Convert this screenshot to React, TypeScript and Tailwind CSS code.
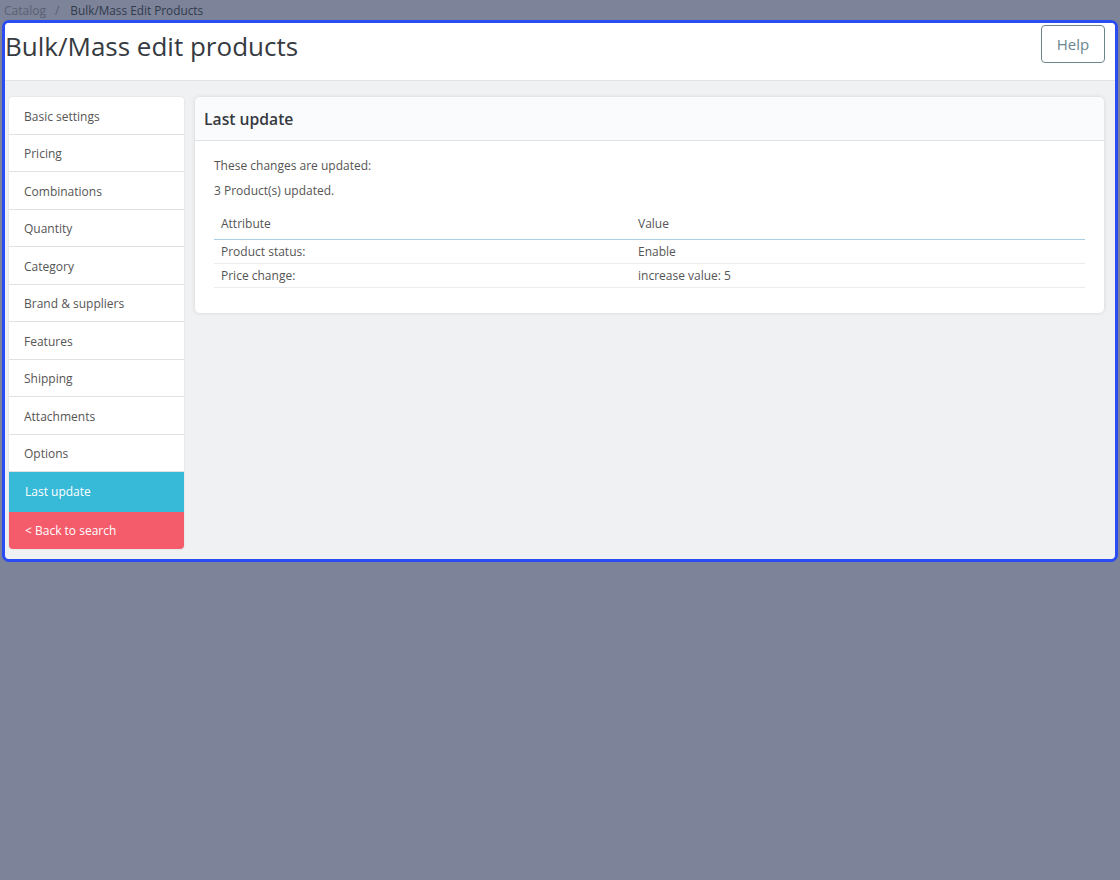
import React from 'react';

const tabs = [
  'Basic settings',
  'Pricing',
  'Combinations',
  'Quantity',
  'Category',
  'Brand & suppliers',
  'Features',
  'Shipping',
  'Attachments',
  'Options',
];

const rows = [
  { attr: 'Product status:', value: 'Enable' },
  { attr: 'Price change:', value: 'increase value: 5' },
];

const App: React.FC = () => {
  return (
    <div
      className="min-h-[880px] bg-[#7d8398]"
      style={{ fontFamily: '"Open Sans", "Noto Sans", sans-serif' }}
    >
      {/* Breadcrumb */}
      <div className="flex items-center h-[20px] pt-[2px] pl-[4px] text-[12px] leading-none">
        <span className="text-[#5a6074]">Catalog</span>
        <span className="text-[#5a6074] pl-[9px] pr-[11px]">/</span>
        <span className="text-[#2f3a4d] text-[11.8px]">Bulk/Mass Edit Products</span>
      </div>

      {/* Frame */}
      <div className="mx-[2px] w-[1116px] h-[542px] border-[3px] border-[#2a4cf2] rounded-[7px] bg-[#eff1f2] overflow-hidden flex flex-col">
        {/* Header */}
        <div className="bg-white h-[58px] shrink-0 border-b border-[#dfe3e6] flex items-start justify-between">
          <h1 className="text-[26px] leading-none text-[#363a41] mt-[10px] ml-0">
            Bulk/Mass edit products
          </h1>
          <button className="mt-[2px] mr-[10px] h-[38px] w-[64px] border border-[#6c868e] rounded-[4px] text-[15px] text-[#6c868e] bg-white">
            Help
          </button>
        </div>

        {/* Content */}
        <div className="flex items-start gap-[11px] pt-[16px] pl-[4px] pr-[11px]">
          {/* Sidebar */}
          <div className="w-[175px] shrink-0 rounded-[4px] overflow-hidden shadow-[0_0_2px_rgba(0,0,0,0.12)]">
            {tabs.map((t) => (
              <div
                key={t}
                className="h-[37.5px] flex items-center pl-[15px] pt-[3px] bg-white border-b border-[#dfe3e6] text-[12px] text-[#555]"
              >
                {t}
              </div>
            ))}
            <div className="h-[40px] flex items-center pl-[16px] bg-[#37b9d8] text-[12px] text-white">
              Last update
            </div>
            <div className="h-[37px] flex items-center pl-[16px] bg-[#f45b6b] text-[12px] text-white">
              &lt; Back to search
            </div>
          </div>

          {/* Panel */}
          <div className="flex-1 bg-white rounded-[5px] shadow-[0_0_4px_rgba(0,0,0,0.12)] overflow-hidden">
            <div className="h-[44px] bg-[#fafbfc] border-b border-[#dfe3e6] flex items-center pl-[9px] pt-[2px]">
              <span className="text-[15.7px] font-semibold text-[#363a41]">Last update</span>
            </div>
            <div className="px-[19px] pt-[16px] pb-[25px] text-[12px] text-[#555]">
              <p className="leading-[18px]">These changes are updated:</p>
              <p className="leading-[18px] mt-[7px]">3 Product(s) updated.</p>
              <table className="w-full mt-[9px] border-collapse">
                <thead>
                  <tr className="border-b border-[#a9cfe8]">
                    <th className="w-[417px] text-left font-normal pl-[7px] h-[30px] align-middle">
                      Attribute
                    </th>
                    <th className="text-left font-normal pl-[7px] align-middle">Value</th>
                  </tr>
                </thead>
                <tbody>
                  {rows.map((r) => (
                    <tr key={r.attr} className="border-b border-[#eaedef]">
                      <td className="pl-[7px] pt-[2px] h-[24px] align-middle">{r.attr}</td>
                      <td className="pl-[7px] pt-[2px] align-middle">{r.value}</td>
                    </tr>
                  ))}
                </tbody>
              </table>
            </div>
          </div>
        </div>
      </div>
    </div>
  );
};

export default App;
